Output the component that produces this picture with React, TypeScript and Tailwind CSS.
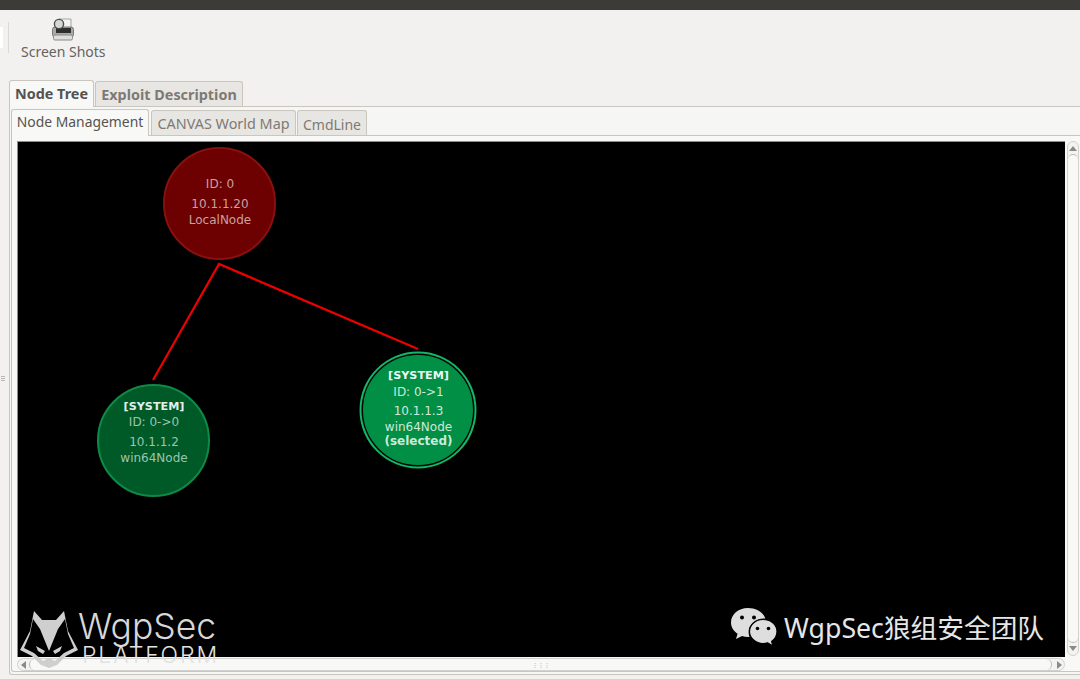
const UI = { fontFamily: '"Noto Sans", "Open Sans", sans-serif' };
const DJ = { fontFamily: '"DejaVu Sans", sans-serif' };

function Tab({ label, active, cls }: { label: string; active?: boolean; cls: string }) {
  return (
    <div
      className={
        "flex h-full items-center justify-center rounded-t-[3px] border border-b-0 border-[#c9c6c0] " +
        cls + " " +
        (active ? "bg-[#f8f8f7] text-[#55534f]" : "bg-[#e8e6e2] text-[#7d7a75]")
      }
    >
      {label}
    </div>
  );
}

function Node({
  x, y, r, fill, stroke, text, selected, children,
}: {
  x: number; y: number; r: number; fill: string; stroke: string; text: string; selected?: boolean; children: React.ReactNode;
}) {
  return (
    <div
      className="absolute flex flex-col items-center rounded-full pl-[2px] text-[12px] leading-[15px]"
      style={{
        left: x - r, top: y - r, width: r * 2, height: r * 2, background: fill,
        border: `2px solid ${selected ? fill : stroke}`,
        boxShadow: selected ? `0 0 0 1.5px #000, 0 0 0 3.5px ${stroke}` : undefined,
        color: text, ...DJ,
      }}
    >
      {children}
    </div>
  );
}

function PrinterIcon() {
  return (
    <svg width="24" height="24" viewBox="0 0 24 24">
      <path d="M8 1h12v9H8z" fill="#f4f4f2" stroke="#a5a5a1" />
      <rect x="1.500" y="9" width="21" height="10" rx="2.500" fill="#a9a9a6" stroke="#77776f" />
      <rect x="5" y="10" width="15" height="5" fill="#2e2e2c" />
      <rect x="2.500" y="17" width="19" height="5" rx="1.500" fill="#dedede" stroke="#8a8a87" />
      <circle cx="8" cy="6" r="4.600" fill="#d5d8d8" stroke="#4c4c4a" strokeWidth="1.400" />
    </svg>
  );
}

function Wolf() {
  return (
    <svg width="60" height="60" viewBox="0 0 60 60" className="absolute left-px top-[468px]">
      <path
        fillRule="evenodd"
        fill="#cfcfcf"
        d="M15 2 L23 11 L37 11 L45 2 L49 22 L59 41 L47 47 L38 56 L30 59 L22 56 L13 47 L1 41 L11 22 Z
           M14 10 L21 20 L30 42 L39 20 L46 10 L49 25 L55 39 L45 44 L36 52 L30 49 L24 52 L15 44 L5 39 L11 25 Z"
      />
      <path d="M17 37 L26 42 L24 45 L19 42 Z M43 37 L34 42 L36 45 L41 42 Z" fill="#cfcfcf" />
    </svg>
  );
}

function WeChat() {
  return (
    <svg width="48" height="42" viewBox="0 0 48 42" className="shrink-0">
      <path d="M18 1C8 1 1 7.600 1 15.500c0 4.700 2.600 8.600 6.600 11.200L6 32l6-3c2 .6 4 .9 6 .9h1.500c-.6-1.600-.9-3.200-.9-4.900 0-7.600 7-13.400 15.800-13.400h1C33.400 5.300 26.300 1 18 1Z" fill="#dedede" />
      <circle cx="12" cy="10.500" r="2" fill="#000" />
      <circle cx="24" cy="10.500" r="2" fill="#000" />
      <path d="M47 24.500C47 17.500 40.500 12.500 33 12.500S19.500 17.800 19.500 24.500 26 36.500 33 36.500c1.600 0 3.200-.3 4.700-.7L43 39l-1.400-4.600C45 32 47 28.500 47 24.500Z" fill="#dedede" stroke="#000" strokeWidth="1.200" />
      <circle cx="27.500" cy="21.500" r="1.800" fill="#000" />
      <circle cx="38.500" cy="21.500" r="1.800" fill="#000" />
    </svg>
  );
}

export default function App() {
  return (
    <div className="relative flex h-[679px] w-[1080px] flex-col overflow-hidden bg-[#f2f1ef]" style={UI}>
      <div className="h-[10px] shrink-0 bg-[#3c3b37]" />

      {/* toolbar */}
      <div className="relative flex h-[70px] shrink-0 items-start">
        <div className="mt-[17px] h-[21px] w-[3px] bg-white" />
        <div className="ml-[5px] mt-[12px] h-[31px] w-px bg-[#dcdad6]" />
        <div className="ml-[12px] mt-[8px] flex flex-col items-center">
          <PrinterIcon />
          <span className="text-[14px] leading-[19px] text-[#65635f]">Screen Shots</span>
        </div>
      </div>

      {/* outer tabs */}
      <div className="flex h-[26px] shrink-0 items-end pl-[9px]">
        <div className="relative z-10 -mb-px h-[27px] w-[85px]"><Tab label="Node Tree" active cls="text-[14.400px] font-bold" /></div>
        <div className="ml-px h-[25px] w-[148px]"><Tab label="Exploit Description" cls="pt-[2px] text-[14.400px] font-bold" /></div>
      </div>

      {/* outer panel */}
      <div className="ml-[9px] flex h-[569px] w-[1071px] flex-col rounded-bl-[3px] border-t border-b border-l border-[#c9c6c0] bg-[#f6f6f5] pl-px pt-px">
        <div className="flex h-[27px] shrink-0 items-end">
          <div className="relative z-10 -mb-px h-[27px] w-[138px]"><Tab label="Node Management" active cls="pb-[1px] text-[13.900px]" /></div>
          <div className="ml-[2px] h-[25px] w-[145px]"><Tab label="CANVAS World Map" cls="pt-[2px] text-[14.400px]" /></div>
          <div className="ml-px h-[25px] w-[70px]"><Tab label="CmdLine" cls="pt-[2px] text-[14px]" /></div>
        </div>
        <div className="flex h-[537px] flex-col rounded-bl-[3px] border-t border-b border-l border-[#c9c6c0] bg-[#f8f8f7] pl-[5px] pt-[5px]">
          <div className="flex h-[516px] shrink-0">
            {/* canvas */}
            <div className="relative h-[516px] w-[1048px] shrink-0 border-t border-l border-[#8f8d88] bg-black">
              <svg width="1048" height="516" className="absolute left-0 top-0">
                <path d="M135 238 L201 122 L400 207" fill="none" stroke="#ee0000" strokeWidth="2.200" />
              </svg>
              <Node x={201} y={61} r={56.500} fill="#6d0000" stroke="#8a0f0f" text="#c9a0a0">
                <span className="mt-[28px]">ID: 0</span>
                <span className="mt-[5px]">10.1.1.20</span>
                <span className="mt-px">LocalNode</span>
              </Node>
              <Node x={135} y={298.500} r={56.500} fill="#005a28" stroke="#0d8a48" text="#9cc4ac">
                <span className="mt-[13px] text-[11.200px] font-bold text-[#e4efe8]">[SYSTEM]</span>
                <span className="mt-px">ID: 0-&gt;0</span>
                <span className="mt-[5px]">10.1.1.2</span>
                <span className="mt-px">win64Node</span>
              </Node>
              <Node x={399.500} y={267.500} r={55} fill="#008f45" stroke="#12b866" text="#cfe8d8" selected>
                <span className="mt-[11px] text-[11.200px] font-bold text-[#eef7f1]">[SYSTEM]</span>
                <span className="mt-[2px]">ID: 0-&gt;1</span>
                <span className="mt-[4px]">10.1.1.3</span>
                <span className="mt-px">win64Node</span>
                <span className="-mt-px font-bold">(selected)</span>
              </Node>
            </div>
            {/* v scrollbar */}
            <div className="ml-[2px] flex h-[515px] w-[12px] flex-col items-center rounded-full border border-[#d3d1cd] bg-[#f3f3f2]">
              <span className="mt-[4px] h-0 w-0 shrink-0 border-x-[4px] border-b-[5px] border-x-transparent border-b-[#8a8a87]" />
              <div className="mt-[3px] h-[489px] w-full shrink-0 rounded-full border-t border-b border-[#bdbbb6] bg-[#f8f8f7]" />
              <span className="mt-[3px] h-0 w-0 shrink-0 border-x-[4px] border-t-[5px] border-x-transparent border-t-[#8a8a87]" />
            </div>
          </div>
          {/* h scrollbar */}
          <div className="mt-px flex h-[13px] w-[1048px] items-center rounded-full border border-[#d3d1cd] bg-[#f3f3f2]">
            <span className="ml-[3px] h-0 w-0 shrink-0 border-y-[4px] border-r-[5px] border-y-transparent border-r-[#8a8a87]" />
            <div className="ml-[3px] flex h-full w-[1023px] shrink-0 items-center justify-center rounded-full border-x border-[#bdbbb6] bg-[#f8f8f7] text-[6px] leading-none text-[#a9a7a3]">⋮⋮⋮</div>
            <span className="ml-[5px] h-0 w-0 shrink-0 border-y-[4px] border-l-[5px] border-y-transparent border-l-[#8a8a87]" />
          </div>
        </div>
      </div>

      {/* paned grip */}
      <div className="absolute left-px top-[376px] flex flex-col gap-px">
        <span className="h-px w-[4px] bg-[#b8b6b2]" />
        <span className="h-px w-[4px] bg-[#b8b6b2]" />
        <span className="h-px w-[4px] bg-[#b8b6b2]" />
      </div>

      {/* watermarks */}
      <div className="pointer-events-none absolute left-[18px] top-[141px] h-[530px] w-[1060px]">
        <Wolf />
        <span className="absolute left-[60px] top-[469px] text-[35.500px] font-light leading-[34px] text-[#d8d8d8]" style={{ fontFamily: '"Inter", sans-serif' }}>WgpSec</span>
        <span className="absolute left-[64px] top-[503px] text-[23px] font-light leading-[22px] tracking-[1.900px] text-[#e2e2e2]" style={{ fontFamily: '"Inter", sans-serif' }}>PLATFORM</span>
        <div className="absolute left-[712px] top-[465px] flex items-center gap-[6px]">
          <WeChat />
          <span className="text-[26.700px] leading-[44px] text-[#e6e6e6]" style={{ fontFamily: '"Noto Sans", "Noto Sans CJK SC", sans-serif' }}>WgpSec狼组安全团队</span>
        </div>
      </div>
    </div>
  );
}
